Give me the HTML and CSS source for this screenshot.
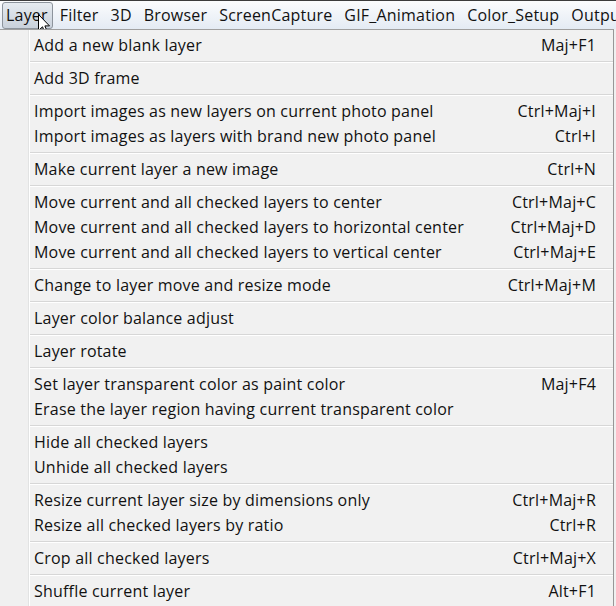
FILE: index.html
```html
<!DOCTYPE html>
<html lang="en">
<head>
    <meta charset="UTF-8">
    <title>Layer menu</title>
    <link rel="stylesheet" href="styles.css">
</head>
<body>

<div class="menubar">
    <span class="bar-item active">Layer</span>
    <span class="bar-item">Filter</span>
    <span class="bar-item">3D</span>
    <span class="bar-item">Browser</span>
    <span class="bar-item">ScreenCapture</span>
    <span class="bar-item">GIF_Animation</span>
    <span class="bar-item">Color_Setup</span>
    <span class="bar-item">Output</span>
    <!-- mouse pointer over the Layer entry -->
    <svg class="cursor" width="13" height="21" viewBox="0 0 13 21">
        <path d="M0.5 0.5 L0.5 16.5 L4.5 12.8 L7.2 19.5 L9.6 18.5 L6.9 11.9 L11.5 11.9 Z" fill="#fff" stroke="#000" stroke-width="1"/>
    </svg>
</div>

<div class="menu">
    <div class="item"><span>Add a new blank layer</span><span>Maj+F1</span></div>
    <div class="sep"></div>
    <div class="item"><span>Add 3D frame</span><span></span></div>
    <div class="sep"></div>
    <div class="item"><span>Import images as new layers on current photo panel</span><span>Ctrl+Maj+I</span></div>
    <div class="item"><span>Import images as layers with brand new photo panel</span><span>Ctrl+I</span></div>
    <div class="sep"></div>
    <div class="item"><span>Make current layer a new image</span><span>Ctrl+N</span></div>
    <div class="sep"></div>
    <div class="item"><span>Move current and all checked layers to center</span><span>Ctrl+Maj+C</span></div>
    <div class="item"><span>Move current and all checked layers to horizontal center</span><span>Ctrl+Maj+D</span></div>
    <div class="item"><span>Move current and all checked layers to vertical center</span><span>Ctrl+Maj+E</span></div>
    <div class="sep"></div>
    <div class="item"><span>Change to layer move and resize mode</span><span>Ctrl+Maj+M</span></div>
    <div class="sep"></div>
    <div class="item"><span>Layer color balance adjust</span><span></span></div>
    <div class="sep"></div>
    <div class="item"><span>Layer rotate</span><span></span></div>
    <div class="sep"></div>
    <div class="item"><span>Set layer transparent color as paint color</span><span>Maj+F4</span></div>
    <div class="item"><span>Erase the layer region having current transparent color</span><span></span></div>
    <div class="sep"></div>
    <div class="item"><span>Hide all checked layers</span><span></span></div>
    <div class="item"><span>Unhide all checked layers</span><span></span></div>
    <div class="sep"></div>
    <div class="item"><span>Resize current layer size by dimensions only</span><span>Ctrl+Maj+R</span></div>
    <div class="item"><span>Resize all checked layers by ratio</span><span>Ctrl+R</span></div>
    <div class="sep"></div>
    <div class="item"><span>Crop all checked layers</span><span>Ctrl+Maj+X</span></div>
    <div class="sep"></div>
    <div class="item"><span>Shuffle current layer</span><span>Alt+F1</span></div>
</div>

</body>
</html>
```

FILE: styles.css
```css
body {
    margin: 0;
    width: 616px;
    height: 606px;
    overflow: hidden;
    background-color: #f0f0f0;
    font-family: "Open Sans", "Liberation Sans", sans-serif;
    font-size: 16px;
    letter-spacing: 0.2px;
    color: #111;
}
/* menu bar */
.menubar {
    position: relative;
    display: flex;
    height: 28px;
    align-items: center;
    padding-left: 2px;
    border-top: 1px solid #3c3c3c;
    background: linear-gradient(#fbfcfd, #e4ebf4);
    white-space: nowrap;
    overflow: hidden;
}
.bar-item {
    padding: 1px 4px 2px 3px;
    margin-right: 3px;
    border: 1px solid transparent;
    border-radius: 3px;
}
.bar-item.active {
    border-color: #8d949c;
    background: linear-gradient(#e6ebf0, #c9d1db);
}
.cursor {
    position: absolute;
    left: 38px;
    top: 13px;
}
/* drop down */
.menu {
    width: 613px;
    height: 575px;
    border-top: 1px solid #a0a0a0;
    border-right: 1px solid #979797;
    padding-top: 3px;
    background:
        linear-gradient(to right, #f0f0f0 28px, #e2e3e3 28px, #e2e3e3 29px, #ffffff 29px, #ffffff 30px, #f1f1f1 30px);
}
.item {
    display: flex;
    justify-content: space-between;
    align-items: center;
    height: 24px;
    padding-bottom: 1px;
    padding-left: 34px;
    padding-right: 17px;
    white-space: nowrap;
}
.sep {
    height: 8px;
    margin-left: 30px;
    background: linear-gradient(transparent 3px, #d7d7d7 3px, #d7d7d7 4px, #fff 4px, #fff 5px, transparent 5px);
}
```
